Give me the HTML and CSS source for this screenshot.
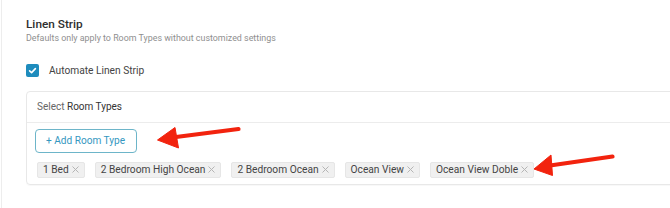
FILE: index.html
```html
<!DOCTYPE html>
<html>
<head>
<meta charset="utf-8">
<link rel="stylesheet" href="styles.css">
</head>
<body>
<div class="page">
  <h1 class="title">Linen Strip</h1>
  <p class="subtitle">Defaults only apply to Room Types without customized settings</p>
  <label class="check-row">
    <span class="checkbox">
      <svg width="13" height="13" viewBox="0 0 13 13"><path d="M3.6 6.8 L5.6 8.6 L9.4 4.6" fill="none" stroke="#fff" stroke-width="1.6" stroke-linecap="round" stroke-linejoin="round"/></svg>
    </span>
    <span class="check-label">Automate Linen Strip</span>
  </label>
  <div class="panel">
    <div class="panel-head"><span class="muted">Select</span> Room Types</div>
    <div class="panel-body">
      <button class="add-btn">+ Add Room Type</button>
      <div class="tags">
        <span class="tag">1 Bed<svg class="x" width="7" height="7" viewBox="0 0 7 7"><path d="M0.5 0.5 L6.5 6.5 M6.5 0.5 L0.5 6.5" stroke="#b5b5b5" stroke-width="1"/></svg></span>
        <span class="tag">2 Bedroom High Ocean<svg class="x" width="7" height="7" viewBox="0 0 7 7"><path d="M0.5 0.5 L6.5 6.5 M6.5 0.5 L0.5 6.5" stroke="#b5b5b5" stroke-width="1"/></svg></span>
        <span class="tag">2 Bedroom Ocean<svg class="x" width="7" height="7" viewBox="0 0 7 7"><path d="M0.5 0.5 L6.5 6.5 M6.5 0.5 L0.5 6.5" stroke="#b5b5b5" stroke-width="1"/></svg></span>
        <span class="tag">Ocean View<svg class="x" width="7" height="7" viewBox="0 0 7 7"><path d="M0.5 0.5 L6.5 6.5 M6.5 0.5 L0.5 6.5" stroke="#b5b5b5" stroke-width="1"/></svg></span>
        <span class="tag">Ocean View Doble<svg class="x" width="7" height="7" viewBox="0 0 7 7"><path d="M0.5 0.5 L6.5 6.5 M6.5 0.5 L0.5 6.5" stroke="#b5b5b5" stroke-width="1"/></svg></span>
      </div>
    </div>
  </div>
  <svg class="annotations" width="670" height="208" viewBox="0 0 670 208">
    <g fill="#f2230e" stroke="#f2230e">
      <path d="M176 137 L238.5 129" stroke-width="4.2" stroke-linecap="round" fill="none"/>
      <path d="M157.5 140 L175 127.5 L178.5 148 Z" stroke-width="1" stroke-linejoin="round"/>
      <path d="M550 165.5 L612.5 156.5" stroke-width="4.2" stroke-linecap="round" fill="none"/>
      <path d="M534 169 L551 155 L552.5 175.5 Z" stroke-width="1" stroke-linejoin="round"/>
    </g>
  </svg>
</div>
</body>
</html>
```

FILE: styles.css
```css
* { box-sizing: border-box; }
html, body {
  margin: 0;
  padding: 0;
  background: #fff;
  overflow: hidden;
}
body {
  font-family: Roboto, "Liberation Sans", sans-serif;
  width: 670px;
  height: 208px;
}
.page {
  position: relative;
  margin-left: 1px;
  height: 208px;
  border-left: 1px solid #ededed;
  padding: 17px 0 0 24px;
}
.title {
  margin: 0;
  font-size: 11.8px;
  font-weight: 500;
  line-height: 14px;
  color: #2e2e2e;
}
.subtitle {
  margin: 1px 0 0;
  font-size: 8.9px;
  line-height: 12px;
  color: #8f8f8f;
}
.check-row {
  display: flex;
  align-items: center;
  height: 14px;
  margin-top: 19.5px;
}
.checkbox {
  width: 13px;
  height: 13px;
  border-radius: 2px;
  background: #1e8cbd;
  display: flex;
}
.check-label {
  margin-left: 10px;
  font-size: 10.2px;
  line-height: 14px;
  color: #444;
  padding-top: 1px;
}
.panel {
  margin-top: 13px;
  margin-right: -20px;
  border: 1px solid #e8e8e8;
  border-radius: 4px;
  box-shadow: 0 1px 1px rgba(0,0,0,0.03);
}
.panel-head {
  height: 31px;
  line-height: 30px;
  padding-left: 10px;
  border-bottom: 1px solid #ececec;
  font-size: 10px;
  color: #333;
}
.muted { color: #666; }
.panel-body {
  padding: 6px 10px 6px 10px;
}
.add-btn {
  display: block;
  margin-left: -2.5px;
  height: 24px;
  padding: 0 10.5px;
  border: 1.5px solid #6db5c9;
  border-radius: 4px;
  background: #fff;
  font-family: Roboto, "Liberation Sans", sans-serif;
  font-size: 10.1px;
  color: #3597bf;
  line-height: 20px;
}
.tags {
  display: flex;
  gap: 10px;
  margin-top: 9px;
}
.tag {
  display: flex;
  align-items: center;
  height: 16px;
  padding: 0 5px 0 5px;
  background: #f0f0f0;
  border: 1px solid #e6e6e6;
  border-radius: 2px;
  font-size: 10.2px;
  color: #444;
  white-space: nowrap;
}
.x {
  margin-left: 3px;
}
.annotations {
  position: absolute;
  left: -2px;
  top: 0;
  pointer-events: none;
}
```
